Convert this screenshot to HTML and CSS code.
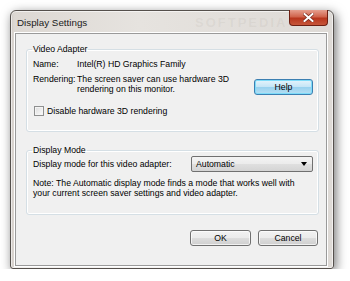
FILE: index.html
```html
<!DOCTYPE html>
<html lang="en">
<head>
    <meta charset="UTF-8">
    <title>Display Settings</title>
    <link rel="stylesheet" href="styles.css">
</head>
<body>
    <div class="window">
        <div class="titlebar">
            <span class="title">Display Settings</span>
            <span class="watermark">SOFTPEDIA</span>
            <div class="close">
                <svg width="11" height="9" viewBox="0 0 11 9">
                    <path d="M1.5 1 L9.5 8 M9.5 1 L1.5 8" stroke="#7a2a1c" stroke-width="3.4" stroke-linecap="square"/>
                    <path d="M1.5 1 L9.5 8 M9.5 1 L1.5 8" stroke="#fff" stroke-width="2" stroke-linecap="square"/>
                </svg>
            </div>
        </div>
        <div class="client">
            <fieldset class="group adapter">
                <legend>Video Adapter</legend>
                <div class="grid">
                    <span class="label">Name:</span>
                    <span class="value">Intel(R) HD Graphics Family</span>
                    <span></span>
                    <span class="label">Rendering:</span>
                    <span class="value">The screen saver can use hardware 3D<br>rendering on this monitor.</span>
                    <button class="btn default help">Help</button>
                </div>
                <label class="check">
                    <span class="box"></span>
                    Disable hardware 3D rendering
                </label>
            </fieldset>
            <fieldset class="group mode">
                <legend>Display Mode</legend>
                <div class="mode-row">
                    <span>Display mode for this video adapter:</span>
                    <div class="select">
                        <span>Automatic</span>
                        <span class="arrow"></span>
                    </div>
                </div>
                <p class="note">Note: The Automatic display mode finds a mode that works well with<br>your current screen saver settings and video adapter.</p>
            </fieldset>
            <div class="buttons">
                <button class="btn">OK</button>
                <button class="btn">Cancel</button>
            </div>
        </div>
    </div>
</body>
</html>
```

FILE: styles.css
```css
body {
    margin: 0;
    padding: 10px 0 0 10px;
    background: #fff;
    font-family: "Liberation Sans", Arial, sans-serif;
    font-size: 8.7px;
    line-height: 10px;
    color: #000;
}
.window {
    position: relative;
    width: 313px;
    height: 252px;
    padding: 0 5px 5px 4px;
    border: 1px solid #55504c;
    border-radius: 6px 6px 3px 3px;
    background: linear-gradient(to right, #cfc9c4 0, #ddd8d3 3px, #e6e3df 40%, #dedad6 100%);
    box-shadow: 2px 3px 11px rgba(0, 0, 0, 0.55), inset 0 0 0 1px rgba(255, 255, 255, 0.6);
}
.titlebar {
    position: relative;
    height: 22px;
}
.title {
    position: absolute;
    left: 2px;
    top: 6px;
    font-size: 9.8px;
    line-height: 12px;
    color: #1b1b1b;
}
.watermark {
    position: absolute;
    left: 180px;
    top: 5px;
    font-size: 13px;
    font-weight: bold;
    letter-spacing: 2px;
    line-height: 14px;
    color: rgba(150, 140, 130, 0.1);
}
.close {
    position: absolute;
    right: 0;
    top: -1px;
    width: 37px;
    height: 15px;
    border: 1px solid #6e1f12;
    border-top: none;
    border-radius: 0 0 4px 4px;
    background: linear-gradient(#e6a08f, #d0644c 45%, #b8361d 55%, #c6563a);
    display: flex;
    align-items: center;
    justify-content: center;
}
.client {
    height: 222px;
    padding: 9px 7px 0 10px;
    border: 1px solid #9a9a9a;
    background: #f0f0f0;
    box-shadow: 0 0 0 1px #fff;
    box-sizing: content-box;
    width: 293px;
}
.group {
    margin: 0;
    padding: 0 6px 0 6px;
    border: 1px solid #d5dfe5;
    border-radius: 3px;
    box-shadow: inset 0 0 0 1px #fff;
}
.group legend {
    padding: 0 1px;
    margin-left: -1px;
    line-height: 12px;
}
.grid {
    display: grid;
    grid-template-columns: 44px 1fr 58px;
    row-gap: 5px;
    padding-top: 4px;
}
.help {
    margin-top: 5px;
    margin-right: -1px;
}
.check {
    display: flex;
    align-items: center;
    gap: 3px;
    margin-top: 11px;
    margin-left: 1px;
    padding-bottom: 15px;
}
.box {
    width: 8px;
    height: 8px;
    border: 1px solid #8e8f8f;
    background: linear-gradient(135deg, #dcdcdc, #fbfbfb);
    box-shadow: inset 0 0 0 1px #f4f4f4;
}
.mode {
    margin-top: 13px;
    padding-bottom: 16px;
}
.mode legend {
    line-height: 11px;
}
.mode-row {
    display: flex;
    align-items: center;
    justify-content: space-between;
    height: 16px;
    margin-right: -1px;
}
.select {
    box-sizing: border-box;
    width: 122px;
    height: 16px;
    border: 1px solid #707070;
    border-radius: 2px;
    background: linear-gradient(#f4f4f4, #ebebeb 50%, #dfdfdf 51%, #d4d4d4);
    display: flex;
    align-items: center;
    justify-content: space-between;
    padding: 0 5px 0 4px;
}
.arrow {
    width: 0;
    height: 0;
    border-left: 3.5px solid transparent;
    border-right: 3.5px solid transparent;
    border-top: 4px solid #000;
}
.note {
    margin: 6px 0 0;
}
.buttons {
    display: flex;
    justify-content: flex-end;
    gap: 7px;
    margin-top: 15px;
    margin-right: 1px;
}
.btn {
    box-sizing: border-box;
    width: 60px;
    height: 16px;
    padding: 0;
    border: 1px solid #707070;
    border-radius: 3px;
    background: linear-gradient(#f2f2f2, #ebebeb 50%, #dddddd 51%, #cfcfcf);
    box-shadow: inset 0 0 0 1px rgba(255, 255, 255, 0.7);
    font: inherit;
    color: #000;
}
.buttons .btn:first-child {
    width: 61px;
}
.btn.default {
    width: 59px;
    border-color: #3c7fb1;
    background: linear-gradient(#e5f4fc, #c4e5f6 50%, #98d1ef 51%, #b6dff3);
    box-shadow: inset 0 0 0 1px #7edcf9;
}
```
